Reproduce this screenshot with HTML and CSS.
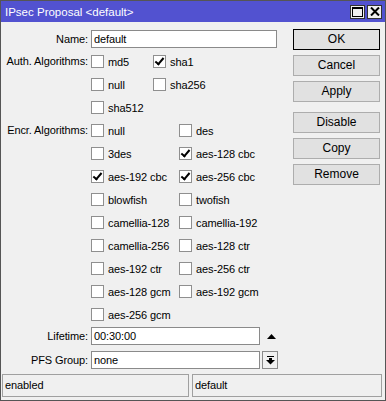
FILE: index.html
```html
<!DOCTYPE html>
<html>
<head>
<meta charset="utf-8">
<link rel="stylesheet" href="styles.css">
</head>
<body>
<div class="window">
  <div class="titlebar">
    <span class="title">IPsec Proposal &lt;default&gt;</span>
    <div class="tbtns">
      <span class="tbtn"><svg width="11" height="10" viewBox="0 0 11 10"><rect x="0.5" y="0.5" width="10" height="9" fill="none" stroke="#000"/><rect x="0" y="0" width="11" height="2" fill="#000"/></svg></span>
      <span class="tbtn"><svg width="10" height="9" viewBox="0 0 10 9"><path d="M1 0.5 L9 8.5 M9 0.5 L1 8.5" stroke="#000" stroke-width="2"/></svg></span>
    </div>
  </div>
  <div class="body">
    <div class="form">
      <div class="row name-row">
        <div class="label">Name:</div>
        <div class="field wide">default</div>
      </div>
      <div class="row">
        <div class="label">Auth. Algorithms:</div>
        <div class="checks auth">
          <div class="cb"><span class="box"></span>md5</div>
          <div class="cb"><span class="box checked"></span>sha1</div>
          <div class="cb"><span class="box"></span>null</div>
          <div class="cb"><span class="box"></span>sha256</div>
          <div class="cb"><span class="box"></span>sha512</div>
        </div>
      </div>
      <div class="row">
        <div class="label">Encr. Algorithms:</div>
        <div class="checks encr">
          <div class="cb"><span class="box"></span>null</div>
          <div class="cb"><span class="box"></span>des</div>
          <div class="cb"><span class="box"></span>3des</div>
          <div class="cb"><span class="box checked"></span>aes-128 cbc</div>
          <div class="cb"><span class="box checked"></span>aes-192 cbc</div>
          <div class="cb"><span class="box checked"></span>aes-256 cbc</div>
          <div class="cb"><span class="box"></span>blowfish</div>
          <div class="cb"><span class="box"></span>twofish</div>
          <div class="cb"><span class="box"></span>camellia-128</div>
          <div class="cb"><span class="box"></span>camellia-192</div>
          <div class="cb"><span class="box"></span>camellia-256</div>
          <div class="cb"><span class="box"></span>aes-128 ctr</div>
          <div class="cb"><span class="box"></span>aes-192 ctr</div>
          <div class="cb"><span class="box"></span>aes-256 ctr</div>
          <div class="cb"><span class="box"></span>aes-128 gcm</div>
          <div class="cb"><span class="box"></span>aes-192 gcm</div>
          <div class="cb"><span class="box"></span>aes-256 gcm</div>
        </div>
      </div>
      <div class="row field-row lifetime">
        <div class="label">Lifetime:</div>
        <div class="field mid">00:30:00</div>
        <span class="uparrow"><svg width="9" height="5" viewBox="0 0 9 5"><path d="M0 5 L4.5 0 L9 5 Z" fill="#000"/></svg></span>
      </div>
      <div class="row field-row pfs">
        <div class="label">PFS Group:</div>
        <div class="field mid">none</div>
        <span class="ddbtn"><svg width="9" height="9" viewBox="0 0 9 9"><rect x="1" y="0" width="7" height="1" fill="#000"/><rect x="3" y="2" width="3" height="2" fill="#000"/><path d="M0 4 L9 4 L4.5 8.5 Z" fill="#000"/></svg></span>
      </div>
    </div>
    <div class="buttons">
      <div class="btn default">OK</div>
      <div class="btn">Cancel</div>
      <div class="btn">Apply</div>
      <div class="btn sep">Disable</div>
      <div class="btn">Copy</div>
      <div class="btn">Remove</div>
    </div>
  </div>
  <div class="status">
    <div class="panel left">enabled</div>
    <div class="panel right">default</div>
  </div>
</div>
</body>
</html>
```
FILE: styles.css
```css
* { box-sizing: border-box; }
html, body { margin: 0; padding: 0; }
body {
  font-family: "Liberation Sans", Arial, sans-serif;
  font-size: 11px;
  letter-spacing: -0.1px;
  color: #000;
  background: #f0f0f0;
}
.window {
  width: 386px;
  height: 401px;
  border: 1px solid #555;
  background: #f0f0f0;
  display: flex;
  flex-direction: column;
  padding: 0 2px 2px 0;
}
.window > * { flex: none; }
.titlebar {
  height: 21px;
  background: #5252d0;
  color: #fff;
  display: flex;
  align-items: center;
  justify-content: space-between;
  padding: 0 3px 0 4px;
  margin-right: -2px;
  font-size: 11.5px;
  letter-spacing: 0;
}
.tbtns { display: flex; gap: 2px; }
.tbtn {
  width: 15px;
  height: 14px;
  background: #f0f0f0;
  border: 1px solid #333;
  display: flex;
  align-items: center;
  justify-content: center;
}
.body {
  display: flex;
  padding-top: 7px;
}
.form {
  width: 291px;
  display: flex;
  flex-direction: column;
}
.form > * { flex: none; }
.row { display: flex; }
.label {
  width: 90px;
  text-align: right;
  padding-right: 3px;
  line-height: 23px;
  white-space: nowrap;
}
.name-row { height: 21px; align-items: flex-start; padding-top: 1px; }
.name-row .label { line-height: 18px; }
.field {
  height: 18px;
  background: #fff;
  border: 1px solid #8a8a8a;
  line-height: 16px;
  padding-left: 2px;
}
.field.wide { width: 186px; }
.field.mid { width: 169px; }
.checks {
  display: grid;
  grid-auto-rows: 23px;
}
.checks.auth { grid-template-columns: 62px auto; }
.checks.encr { grid-template-columns: 88px auto; }
.cb {
  display: flex;
  align-items: center;
  white-space: nowrap;
}
.box {
  width: 13px;
  height: 13px;
  background: #fff;
  border: 1px solid #8f8f8f;
  margin-right: 4px;
  position: relative;
  flex: none;
}
.box.checked::after {
  content: "";
  position: absolute;
  left: 3px;
  top: 0px;
  width: 3px;
  height: 7px;
  border: solid #000;
  border-width: 0 2px 2px 0;
  transform: rotate(40deg);
}
.field-row { height: 18px; align-items: center; }
.field-row.lifetime { margin-top: 1px; }
.field-row.pfs { margin-top: 6px; }
.field-row .label { line-height: 18px; }
.uparrow {
  margin-left: 7px;
  display: flex;
  align-items: center;
}
.ddbtn {
  margin-left: 2px;
  width: 16px;
  height: 18px;
  border: 1px solid #8a8a8a;
  background: #f0f0f0;
  display: flex;
  align-items: center;
  justify-content: center;
}
.buttons {
  display: flex;
  flex-direction: column;
  gap: 5px;
  margin-left: 1px;
}
.btn {
  width: 87px;
  height: 21px;
  background: #e1e1e1;
  border: 1px solid #adadad;
  text-align: center;
  line-height: 19px;
  font-size: 12px;
  letter-spacing: 0;
}
.btn.default { border-color: #000; }
.btn.sep { margin-top: 5px; }
.status {
  display: flex;
  gap: 3px;
  height: 23px;
  margin-top: 5px;
  padding-left: 1px;
}
.panel {
  border: 1px solid #a0a0a0;
  line-height: 21px;
  padding-left: 2px;
}
.panel.left { width: 187px; }
.panel.right { flex: 1; margin-right: 1px; }
```
